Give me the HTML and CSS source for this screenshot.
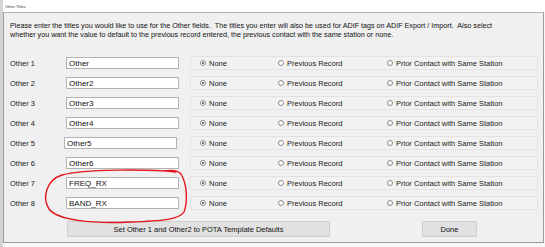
FILE: index.html
```html
<!DOCTYPE html>
<html lang="en">
<head>
    <meta charset="UTF-8">
    <title>Other Titles</title>
    <link rel="stylesheet" href="styles.css">
</head>
<body>
    <div class="screen">
        <div class="titlebar"><span class="title">Other Titles</span></div>

        <div class="window">
            <p class="intro">Please enter the titles you would like to use for the Other fields.&nbsp; The titles you enter will also be used for ADIF tags on ADIF Export / Import.&nbsp; Also select<br>whether you want the value to default to the previous record entered, the previous contact with the same station or none.</p>

            <div class="rows">
                <div class="row">
                    <span class="label">Other 1</span>
                    <input class="field" type="text" value="Other">
                    <div class="choices">
                        <span class="choice"><span class="radio on"></span>None</span>
                        <span class="choice"><span class="radio"></span>Previous Record</span>
                        <span class="choice"><span class="radio"></span>Prior Contact with Same Station</span>
                    </div>
                </div>
                <div class="row">
                    <span class="label">Other 2</span>
                    <input class="field" type="text" value="Other2">
                    <div class="choices">
                        <span class="choice"><span class="radio on"></span>None</span>
                        <span class="choice"><span class="radio"></span>Previous Record</span>
                        <span class="choice"><span class="radio"></span>Prior Contact with Same Station</span>
                    </div>
                </div>
                <div class="row">
                    <span class="label">Other 3</span>
                    <input class="field" type="text" value="Other3">
                    <div class="choices">
                        <span class="choice"><span class="radio on"></span>None</span>
                        <span class="choice"><span class="radio"></span>Previous Record</span>
                        <span class="choice"><span class="radio"></span>Prior Contact with Same Station</span>
                    </div>
                </div>
                <div class="row">
                    <span class="label">Other 4</span>
                    <input class="field" type="text" value="Other4">
                    <div class="choices">
                        <span class="choice"><span class="radio on"></span>None</span>
                        <span class="choice"><span class="radio"></span>Previous Record</span>
                        <span class="choice"><span class="radio"></span>Prior Contact with Same Station</span>
                    </div>
                </div>
                <div class="row">
                    <span class="label">Other 5</span>
                    <input class="field field-left" type="text" value="Other5">
                    <div class="choices">
                        <span class="choice"><span class="radio on"></span>None</span>
                        <span class="choice"><span class="radio"></span>Previous Record</span>
                        <span class="choice"><span class="radio"></span>Prior Contact with Same Station</span>
                    </div>
                </div>
                <div class="row">
                    <span class="label">Other 6</span>
                    <input class="field" type="text" value="Other6">
                    <div class="choices">
                        <span class="choice"><span class="radio on"></span>None</span>
                        <span class="choice"><span class="radio"></span>Previous Record</span>
                        <span class="choice"><span class="radio"></span>Prior Contact with Same Station</span>
                    </div>
                </div>
                <div class="row">
                    <span class="label">Other 7</span>
                    <input class="field" type="text" value="FREQ_RX">
                    <div class="choices">
                        <span class="choice"><span class="radio on"></span>None</span>
                        <span class="choice"><span class="radio"></span>Previous Record</span>
                        <span class="choice"><span class="radio"></span>Prior Contact with Same Station</span>
                    </div>
                </div>
                <div class="row">
                    <span class="label">Other 8</span>
                    <input class="field" type="text" value="BAND_RX">
                    <div class="choices">
                        <span class="choice"><span class="radio on"></span>None</span>
                        <span class="choice"><span class="radio"></span>Previous Record</span>
                        <span class="choice"><span class="radio"></span>Prior Contact with Same Station</span>
                    </div>
                </div>
            </div>

            <div class="actions">
                <button class="btn btn-pota">Set Other 1 and Other2 to POTA Template Defaults</button>
                <button class="btn btn-done">Done</button>
            </div>
        </div>

        <!-- hand drawn red loop around Other 7 / Other 8 -->
        <svg class="scribble" width="545" height="247" viewBox="0 0 545 247">
            <path d="M176 172 C150 169 84 169 62 175 C46 180 42 198 49 209 C57 220 92 224 130 222 C160 221 179 220 184 212 C188 201 187 184 181 174 C178 170 170 170 164 171"
                  fill="none" stroke="#e3161e" stroke-width="1.4" stroke-linecap="round"/>
        </svg>
    </div>
</body>
</html>
```

FILE: styles.css
```css
:root {
    --win-bg: #f0f0f0;
    --frame: #9a9a9a;
    --text: #1a1a1a;
    --box-line: #e2e2e2;
}

body {
    margin: 0;
    padding: 0;
    font-family: 'Liberation Sans', Arial, sans-serif;
    color: var(--text);
    background-color: #f7f7f7;
}

.screen {
    position: relative;
    width: 545px;
    height: 247px;
    overflow: hidden;
    border-left: 3px solid #d6d3d6;
    box-sizing: border-box;
}

.titlebar {
    height: 12px;
    background-color: #ffffff;
    display: flex;
    align-items: center;
    padding-left: 2px;
}

.title {
    font-size: 4px;
    color: #333;
}

.window {
    width: 541px;
    box-sizing: border-box;
    border: 1px solid var(--frame);
    border-top-color: #b5b5b5;
    background-color: var(--win-bg);
    padding: 0 4px 5px 6px;
}

.intro {
    margin: 8px 0 0;
    font-size: 7.2px;
    line-height: 9px;
    white-space: nowrap;
    color: #111;
}

.rows {
    margin-top: 14px;
    display: flex;
    flex-direction: column;
}

.row {
    height: 20px;
    display: flex;
    align-items: center;
    font-size: 7.5px;
}

.label {
    width: 56px;
}

.field {
    width: 113px;
    height: 12px;
    box-sizing: border-box;
    margin: 0;
    padding: 0 0 0 2px;
    border: 1px solid #b4b4b4;
    background-color: #ffffff;
    font-family: 'Liberation Sans', Arial, sans-serif;
    font-size: 8px;
    color: #111;
    outline: none;
}

.field-left {
    margin-left: -2px;
    margin-right: 2px;
}

.choices {
    margin-left: 11px;
    width: 348px;
    height: 14px;
    box-sizing: border-box;
    border: 1px solid var(--box-line);
    border-radius: 1px;
    background-color: #f2f2f2;
    padding-left: 9px;
    display: grid;
    grid-template-columns: 78px 109px auto;
    align-items: center;
}

.choice {
    display: flex;
    align-items: center;
    white-space: nowrap;
}

.radio {
    width: 4px;
    height: 4px;
    border: 0.5px solid #8a8a8a;
    border-radius: 50%;
    margin-right: 3px;
    background-color: #ffffff;
    display: flex;
    justify-content: center;
    align-items: center;
}

.radio.on::after {
    content: '';
    width: 2.5px;
    height: 2.5px;
    border-radius: 50%;
    background-color: #444;
}

.actions {
    margin-top: 8px;
    display: flex;
    align-items: center;
}

.btn {
    height: 16px;
    margin: 0;
    padding: 0;
    border: 1px solid #cfcfcf;
    background-color: #e1e1e1;
    font-family: 'Liberation Sans', Arial, sans-serif;
    font-size: 7.5px;
    color: #111;
}

.btn-pota {
    width: 263px;
    margin-left: 57px;
}

.btn-done {
    width: 55px;
    margin-left: 92px;
}

.scribble {
    position: absolute;
    top: 0;
    left: -3px;
    pointer-events: none;
}
```
